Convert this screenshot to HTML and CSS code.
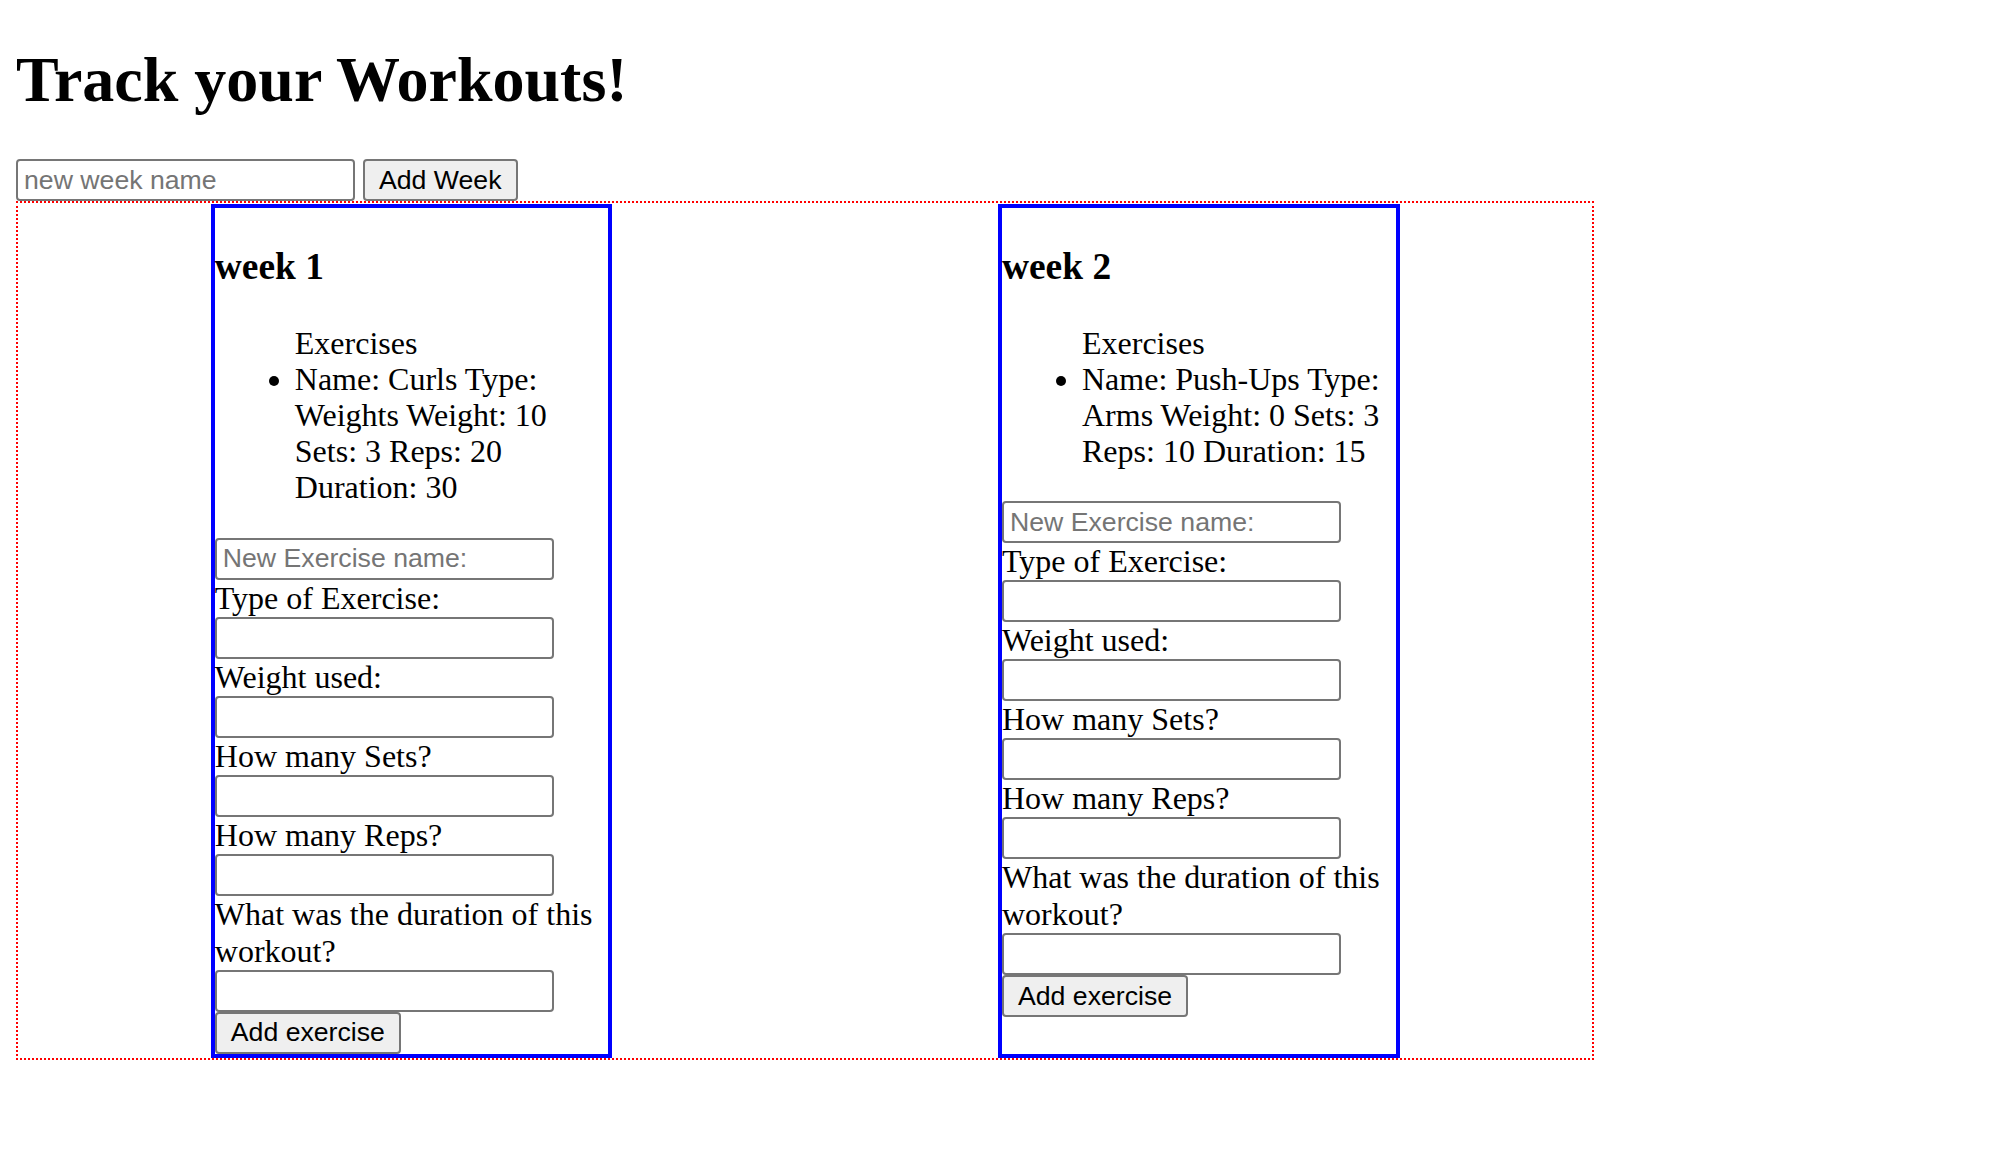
FILE: index.html
```html
<!DOCTYPE html>
<html lang="en">
<head>
<meta charset="utf-8">
<title>Track your Workouts!</title>
<link rel="stylesheet" href="styles.css">
</head>
<body>
<h1 class="title">Track your Workouts!</h1>
<div class="week-form">
  <input class="text-input" type="text" placeholder="new week name">
  <button class="btn" type="button">Add Week</button>
</div>
<div class="weeks">
  <section class="week">
    <h3 class="week-name">week 1</h3>
    <div class="exercises">
      <div class="exercises-title">Exercises</div>
      <ul class="exercise-list">
        <li>Name: Curls Type: Weights Weight: 10 Sets: 3 Reps: 20 Duration: 30</li>
      </ul>
    </div>
    <form class="new-exercise">
      <input class="text-input" type="text" placeholder="New Exercise name:">
      <div class="field-label">Type of Exercise:</div>
      <input class="text-input" type="text">
      <div class="field-label">Weight used:</div>
      <input class="text-input" type="text">
      <div class="field-label">How many Sets?</div>
      <input class="text-input" type="text">
      <div class="field-label">How many Reps?</div>
      <input class="text-input" type="text">
      <div class="field-label">What was the duration of this workout?</div>
      <input class="text-input" type="text">
      <button class="btn" type="button">Add exercise</button>
    </form>
  </section>
  <section class="week">
    <h3 class="week-name">week 2</h3>
    <div class="exercises">
      <div class="exercises-title">Exercises</div>
      <ul class="exercise-list">
        <li>Name: Push-Ups Type: Arms Weight: 0 Sets: 3 Reps: 10 Duration: 15</li>
      </ul>
    </div>
    <form class="new-exercise">
      <input class="text-input" type="text" placeholder="New Exercise name:">
      <div class="field-label">Type of Exercise:</div>
      <input class="text-input" type="text">
      <div class="field-label">Weight used:</div>
      <input class="text-input" type="text">
      <div class="field-label">How many Sets?</div>
      <input class="text-input" type="text">
      <div class="field-label">How many Reps?</div>
      <input class="text-input" type="text">
      <div class="field-label">What was the duration of this workout?</div>
      <input class="text-input" type="text">
      <button class="btn" type="button">Add exercise</button>
    </form>
  </section>
</div>
</body>
</html>
```
FILE: styles.css
```css
html {
  background: #ffffff;
}

body {
  margin: 0 16px 16px;
  font-family: "Liberation Serif", "Times New Roman", serif;
  font-size: 32px;
  line-height: 36.2px;
  color: #000000;
}

.title {
  font-size: 64px;
  line-height: 73.5px;
  font-weight: bold;
  margin: 0;
  padding: 42.88px 0;
}

.week-form {
  display: flex;
  gap: 8px;
  height: 42px;
}

.text-input {
  box-sizing: border-box;
  width: 339px;
  height: 42px;
  margin: 0;
  padding: 2px 6px;
  border: 2px solid #767676;
  border-radius: 4px;
  background: #ffffff;
  color: #000000;
  font-family: "Liberation Sans", Arial, sans-serif;
  font-size: 26.67px;
}

.text-input::placeholder {
  color: #757575;
}

.btn {
  box-sizing: border-box;
  height: 42px;
  margin: 0;
  padding: 2px 14px;
  border: 2px solid #767676;
  border-radius: 4px;
  background: #efefef;
  color: #000000;
  font-family: "Liberation Sans", Arial, sans-serif;
  font-size: 26.67px;
}

.weeks {
  display: flex;
  justify-content: space-around;
  align-items: stretch;
  width: 80%;
  padding-top: 1px;
  border: 2px dotted #ff0000;
}

.week {
  width: 25%;
  border: 4px solid #0000ff;
}

.week-name {
  font-size: 37.44px;
  line-height: 41.5px;
  font-weight: bold;
  margin: 37.44px 0;
}

.exercises {
  margin: 32px 0;
  padding-left: 80px;
}

.exercise-list {
  margin: 0;
  padding: 0;
  list-style: disc outside;
}

.new-exercise {
  display: flex;
  flex-direction: column;
  align-items: flex-start;
  margin: 0;
}

.field-label {
  line-height: 37px;
}
```
